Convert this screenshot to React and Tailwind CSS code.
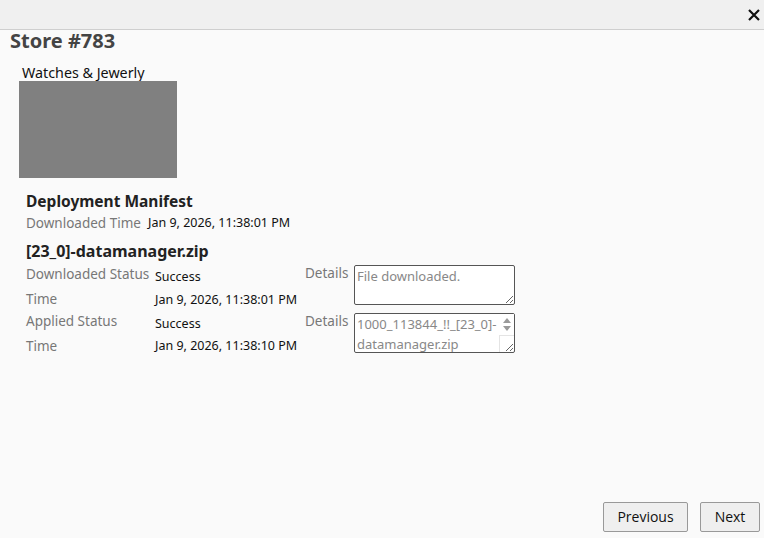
import React from "react";

export default function App() {
  const ta = { fontFamily: '"Noto Sans", sans-serif' };
  return (
    <div className="w-[764px] h-[538px] bg-[#fafafa] flex flex-col overflow-hidden" style={{ fontFamily: '"Noto Sans", "Open Sans", sans-serif' }}>
      <div className="h-[30px] shrink-0 bg-[#f0f0f0] border-b border-[#cfcfcf] flex items-center justify-end pr-[3px]">
        <svg width="14" height="14" viewBox="0 0 14 14" className="mt-[1px]">
          <path d="M2 2 L12 12 M12 2 L2 12" stroke="#111" strokeWidth="2.2" />
        </svg>
      </div>
      <div className="flex-1 flex flex-col px-[10px]">
        <h1 className="text-[20px] font-bold text-[#444] leading-[22px] mt-[0px]">Store #783</h1>
        <div className="pl-[12px] mt-[12px] text-[14.3px] leading-[18px] text-[#111]">Watches &amp; Jewerly</div>
        <div className="ml-[9px] mt-[-1px] w-[158px] h-[97px] bg-[#808080]"></div>
        <div className="pl-[16px] mt-[13px]">
          <div className="text-[15.5px] font-bold text-[#222] leading-[20px]">Deployment Manifest</div>
          <div className="flex items-center mt-[3px] text-[13.5px] leading-[18px]">
            <span className="text-[#777] w-[122px]">Downloaded Time</span>
            <span className="text-[#111] text-[12.5px]">Jan 9, 2026, 11:38:01 PM</span>
          </div>
          <div className="text-[16px] font-bold text-[#222] leading-[20px] mt-[9px]">[23_0]-datamanager.zip</div>
          <div className="grid grid-cols-[129px_150px_49px_161px] mt-[1px] text-[13.5px] leading-[18px]">
            <div className="text-[#777] pt-[3px]">Downloaded Status</div>
            <div className="text-[#111] text-[12.5px] pt-[6px]">Success</div>
            <div className="text-[#777] pt-[2px] row-span-2">Details</div>
            <div className="row-span-2 pt-[3px]">
              <textarea readOnly defaultValue="File downloaded." className="block w-[161px] h-[40px] bg-white border border-[#555] rounded-[2px] px-[2px] pt-0 text-[13px] leading-[20px] text-[#888] resize-y outline-none" style={ta} />
            </div>
            <div className="text-[#777] pt-[4px]">Time</div>
            <div className="text-[#111] text-[12.5px] pt-[5px]">Jan 9, 2026, 11:38:01 PM</div>

            <div className="text-[#777] pt-[3px]">Applied Status</div>
            <div className="text-[#111] text-[12.5px] pt-[6px]">Success</div>
            <div className="text-[#777] pt-[3px] row-span-2">Details</div>
            <div className="row-span-2 pt-[4px]">
              <div className="relative w-[161px] h-[40px]">
                <textarea readOnly defaultValue="1000_113844_!!_[23_0]-datamanager.zip" className="block w-[161px] h-[40px] bg-white border border-[#555] rounded-[2px] pl-[2px] pr-[17px] pt-0 text-[13px] leading-[20px] text-[#888] resize-y outline-none overflow-hidden" style={ta} />
                <div className="absolute right-[1px] top-[1px] w-[15px] h-[21px] bg-white flex flex-col items-center justify-center gap-[3px] pointer-events-none">
                  <svg width="8" height="5" viewBox="0 0 8 5"><path d="M0 5 L4 0 L8 5 Z" fill="#9a9a9a" /></svg>
                  <svg width="8" height="5" viewBox="0 0 8 5"><path d="M0 0 L4 5 L8 0 Z" fill="#9a9a9a" /></svg>
                </div>
                <div className="absolute right-[1px] bottom-[1px] w-[15px] h-[17px] border-l border-t border-[#e4e4e4] pointer-events-none"></div>
              </div>
            </div>
            <div className="text-[#777] pt-[4px]">Time</div>
            <div className="text-[#111] text-[12.5px] pt-[4px]">Jan 9, 2026, 11:38:10 PM</div>
          </div>
        </div>
        <div className="flex-1"></div>
        <div className="flex justify-end gap-[12px] pb-[6px] mr-[-6px]">
          <button className="w-[85px] h-[30px] bg-[#efefef] border border-[#999] rounded-[2px] text-[14px] text-[#111] pb-[2px]" style={{ fontFamily: '"Open Sans", sans-serif' }}>Previous</button>
          <button className="w-[60px] h-[30px] bg-[#efefef] border border-[#999] rounded-[2px] text-[14px] text-[#111] pb-[2px]" style={{ fontFamily: '"Open Sans", sans-serif' }}>Next</button>
        </div>
      </div>
    </div>
  );
}
